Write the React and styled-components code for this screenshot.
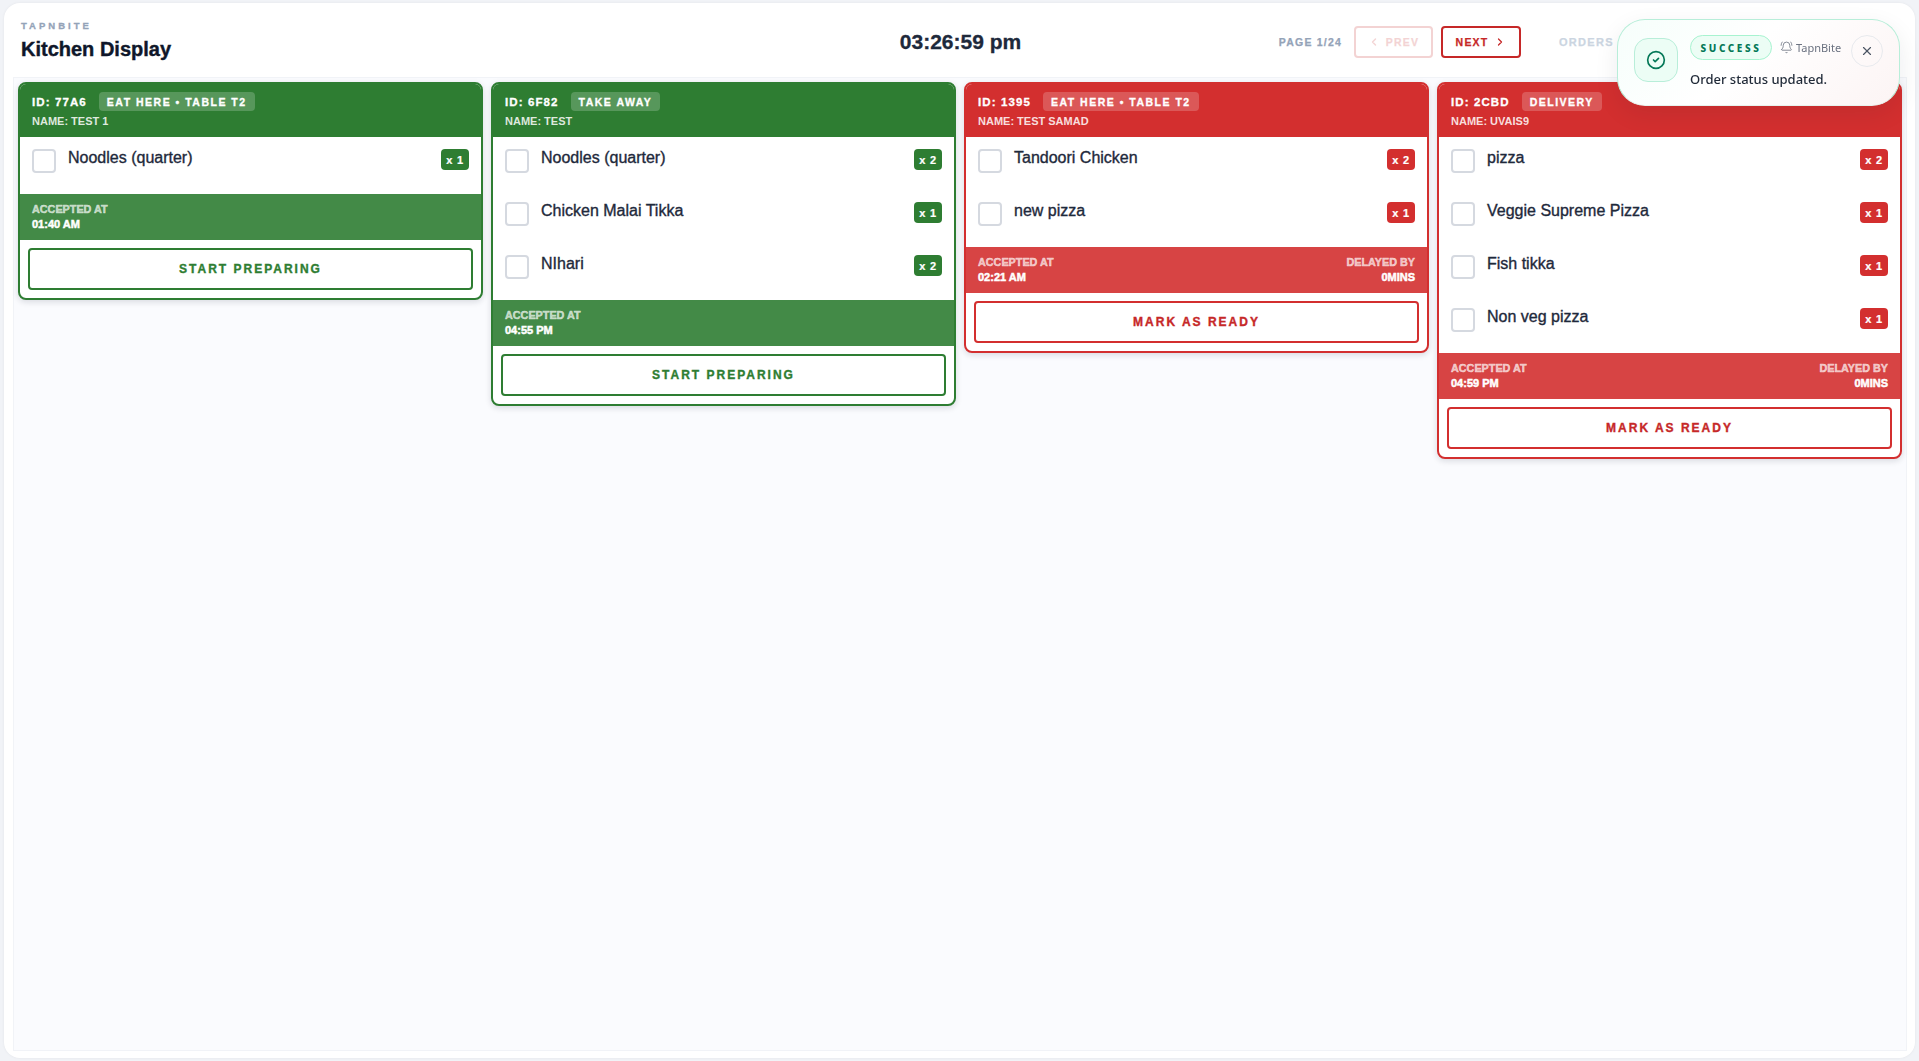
import React from "react";
import styled, { createGlobalStyle } from "styled-components";
import { BellRing, ChevronLeft, ChevronRight, CircleCheck, X } from "lucide-react";

const GlobalStyle = createGlobalStyle`
  html, body {
    margin: 0;
    height: 100%;
    background: #f1f3f7;
  }
  * {
    box-sizing: border-box;
  }
`;

const palette = {
  green: { main: "#2e7d32", soft: "#438a47", ink: "#2e7d32" },
  red: { main: "#d32f2f", soft: "#d74444", ink: "#c62828" },
};

const Page = styled.div`
  height: 1061px;
  padding: 3px 4px 3px 4px;
  font-family: "Liberation Sans", Arial, sans-serif;
  overflow: hidden;
`;

const Panel = styled.div`
  height: 100%;
  display: flex;
  flex-direction: column;
  background: #ffffff;
  border-radius: 16px;
  padding: 0 8px 7px 9px;
  box-shadow: 0 0 3px rgba(15, 23, 42, 0.06);
`;

const TopBar = styled.header`
  height: 74px;
  flex: none;
  display: grid;
  grid-template-columns: 1fr auto 1fr;
  align-items: center;
  padding: 0 0 0 8px;
`;

const Brand = styled.div`
  display: flex;
  flex-direction: column;
  gap: 7px;
`;

const BrandTag = styled.span`
  font-size: 9.5px;
  font-weight: 900;
  letter-spacing: 3px;
  line-height: 11px;
  color: #94a3b8;
  -webkit-text-stroke: 0.3px #94a3b8;
`;

const Title = styled.h1`
  margin: 0;
  font-size: 20px;
  line-height: 22px;
  font-weight: 900;
  color: #0f172a;
  -webkit-text-stroke: 0.4px #0f172a;
`;

const Clock = styled.div`
  font-size: 21px;
  font-weight: 900;
  color: #1e293b;
  margin-right: 7px;
  margin-top: 3px;
  -webkit-text-stroke: 0.3px #1e293b;
`;

const Controls = styled.div`
  display: flex;
  align-items: center;
  justify-content: flex-end;
  margin-top: 4px;
`;

const PageLabel = styled.span`
  font-size: 10.5px;
  font-weight: 900;
  letter-spacing: 1.2px;
  color: #94a3b8;
  margin-right: 12px;
  -webkit-text-stroke: 0.25px #94a3b8;
`;

const PageButton = styled.button`
  display: flex;
  align-items: center;
  justify-content: center;
  gap: 6px;
  width: ${(p) => p.$width}px;
  height: 32px;
  margin-right: 8px;
  padding: 0;
  border: 2px solid #c62828;
  border-radius: 4px;
  background: #ffffff;
  color: #c62828;
  font-family: inherit;
  font-size: 10.5px;
  font-weight: 900;
  letter-spacing: 1.2px;
  -webkit-text-stroke: 0.25px #c62828;
  opacity: ${(p) => (p.disabled ? 0.2 : 1)};
`;

const OrdersLabel = styled.span`
  font-size: 11px;
  font-weight: 900;
  letter-spacing: 1.3px;
  color: #cbd5e1;
  margin-left: 30px;
  width: 348px;
  -webkit-text-stroke: 0.25px #cbd5e1;
`;

const Board = styled.main`
  flex: 1;
  display: grid;
  grid-template-columns: repeat(4, 465px);
  gap: 8px;
  align-content: start;
  align-items: start;
  padding: 4px;
  background: #fafbfe;
  border: 1px solid #f1f3f7;
`;

const Card = styled.article`
  display: flex;
  flex-direction: column;
  background: #ffffff;
  border: 2px solid ${(p) => p.$color};
  border-radius: 8px;
  box-shadow: 0 2px 6px rgba(15, 23, 42, 0.14);
  overflow: hidden;
`;

const CardHead = styled.div`
  height: 53px;
  display: flex;
  flex-direction: column;
  gap: 4px;
  padding: 8px 12px 0;
  background: ${(p) => p.$color};
  color: #ffffff;
`;

const HeadRow = styled.div`
  display: flex;
  align-items: center;
  gap: 12px;
`;

const OrderId = styled.span`
  font-size: 11.5px;
  font-weight: 900;
  letter-spacing: 1.1px;
  -webkit-text-stroke: 0.3px #ffffff;
`;

const TypePill = styled.span`
  height: 19px;
  display: flex;
  align-items: center;
  padding: 0 8px;
  border-radius: 4px;
  background: rgba(255, 255, 255, 0.2);
  font-size: 10.5px;
  font-weight: 900;
  letter-spacing: 1.5px;
  -webkit-text-stroke: 0.3px #ffffff;
`;

const CustomerName = styled.span`
  font-size: 11px;
  line-height: 12px;
  font-weight: 700;
  color: rgba(255, 255, 255, 0.85);
`;

const ItemList = styled.ul`
  list-style: none;
  margin: 0;
  padding: 12px 12px 21px;
  display: flex;
  flex-direction: column;
  gap: 29px;
`;

const ItemRow = styled.li`
  height: 24px;
  display: flex;
  align-items: flex-start;
`;

const Tick = styled.span`
  width: 24px;
  height: 24px;
  flex: none;
  border: 2px solid #d5d9e0;
  border-radius: 4px;
  background: #ffffff;
`;

const ItemName = styled.span`
  flex: 1;
  margin-left: 12px;
  font-size: 16px;
  line-height: 18px;
  font-weight: 400;
  color: #1e293b;
  -webkit-text-stroke: 0.35px #1e293b;
`;

const Qty = styled.span`
  width: 28px;
  height: 21px;
  display: flex;
  align-items: center;
  justify-content: center;
  border-radius: 4px;
  background: ${(p) => p.$color};
  color: #ffffff;
  font-size: 11px;
  font-weight: 900;
  letter-spacing: 0.8px;
  -webkit-text-stroke: 0.2px #ffffff;
`;

const CardFoot = styled.div`
  height: 46px;
  display: flex;
  justify-content: space-between;
  padding: 10px 12px 0;
  background: ${(p) => p.$color};
`;

const FootCell = styled.div`
  display: flex;
  flex-direction: column;
  align-items: ${(p) => (p.$end ? "flex-end" : "flex-start")};
  gap: 4px;
`;

const FootLabel = styled.span`
  font-size: 10.8px;
  line-height: 11px;
  font-weight: 900;
  color: rgba(255, 255, 255, 0.65);
  -webkit-text-stroke: 0.5px rgba(255, 255, 255, 0.65);
`;

const FootValue = styled.span`
  font-size: 11px;
  line-height: 11px;
  font-weight: 900;
  color: #ffffff;
  -webkit-text-stroke: 0.5px #ffffff;
`;

const CardAction = styled.div`
  padding: 8px;
`;

const ActionButton = styled.button`
  width: 100%;
  height: 42px;
  padding: 0 0 1px;
  border: 2px solid ${(p) => p.$color};
  border-radius: 4px;
  background: #ffffff;
  color: ${(p) => p.$ink};
  font-family: inherit;
  font-size: 12px;
  font-weight: 900;
  letter-spacing: 2px;
  -webkit-text-stroke: 0.35px ${(p) => p.$ink};
`;

const Toast = styled.div`
  position: fixed;
  top: 19px;
  left: 1617px;
  width: 283px;
  height: 87px;
  display: flex;
  padding: 15px 16px 0 16px;
  border: 1px solid #b8eed9;
  border-bottom-color: #e6f3ee;
  border-radius: 28px;
  background: linear-gradient(135deg, #f6fefb 0%, #ffffff 45%, #fcf4f4 100%);
  box-shadow: 0 8px 24px rgba(15, 23, 42, 0.08);
  font-family: "Noto Sans", sans-serif;
`;

const ToastIcon = styled.div`
  width: 44px;
  height: 44px;
  flex: none;
  display: flex;
  align-items: center;
  justify-content: center;
  margin-top: 3px;
  border: 1px solid #b8eed9;
  border-radius: 14px;
  background: #ecfdf5;
  color: #047857;
`;

const ToastBody = styled.div`
  flex: 1;
  margin-left: 12px;
`;

const ToastMeta = styled.div`
  display: flex;
  align-items: center;
`;

const ToastBadge = styled.span`
  width: 82px;
  height: 25px;
  display: flex;
  align-items: center;
  justify-content: center;
  border: 1px solid #a7f3d0;
  border-radius: 13px;
  background: #ecfdf5;
  color: #047857;
  font-size: 10px;
  font-weight: 800;
  letter-spacing: 2.6px;
`;

const ToastSource = styled.span`
  display: flex;
  align-items: center;
  gap: 3px;
  margin-left: 8px;
  font-size: 11px;
  color: #6b7280;
`;

const ToastText = styled.p`
  margin: 10px 0 0;
  font-size: 13px;
  line-height: 18px;
  font-weight: 500;
  color: #1f2937;
`;

const ToastClose = styled.button`
  width: 32px;
  height: 32px;
  flex: none;
  display: flex;
  align-items: center;
  justify-content: center;
  padding: 0;
  border: 1px solid #e7e9ed;
  border-radius: 50%;
  background: transparent;
  color: #4b5563;
`;

const orders = [
  {
    id: "77A6",
    type: "EAT HERE • TABLE T2",
    name: "TEST 1",
    accepted: "01:40 AM",
    tone: "green",
    action: "START PREPARING",
    items: [["Noodles (quarter)", 1]],
  },
  {
    id: "6F82",
    type: "TAKE AWAY",
    name: "TEST",
    accepted: "04:55 PM",
    tone: "green",
    action: "START PREPARING",
    items: [
      ["Noodles (quarter)", 2],
      ["Chicken Malai Tikka", 1],
      ["NIhari", 2],
    ],
  },
  {
    id: "1395",
    type: "EAT HERE • TABLE T2",
    name: "TEST SAMAD",
    accepted: "02:21 AM",
    delayed: "0MINS",
    tone: "red",
    action: "MARK AS READY",
    items: [
      ["Tandoori Chicken", 2],
      ["new pizza", 1],
    ],
  },
  {
    id: "2CBD",
    type: "DELIVERY",
    name: "UVAIS9",
    accepted: "04:59 PM",
    delayed: "0MINS",
    tone: "red",
    action: "MARK AS READY",
    items: [
      ["pizza", 2],
      ["Veggie Supreme Pizza", 1],
      ["Fish tikka", 1],
      ["Non veg pizza", 1],
    ],
  },
];

const OrderCard = ({ order }) => {
  const { main, soft, ink } = palette[order.tone];
  return (
    <Card $color={main}>
      <CardHead $color={main}>
        <HeadRow>
          <OrderId>ID: {order.id}</OrderId>
          <TypePill>{order.type}</TypePill>
        </HeadRow>
        <CustomerName>NAME: {order.name}</CustomerName>
      </CardHead>
      <ItemList>
        {order.items.map(([name, qty]) => (
          <ItemRow key={name}>
            <Tick />
            <ItemName>{name}</ItemName>
            <Qty $color={main}>x {qty}</Qty>
          </ItemRow>
        ))}
      </ItemList>
      <CardFoot $color={soft}>
        <FootCell>
          <FootLabel>ACCEPTED AT</FootLabel>
          <FootValue>{order.accepted}</FootValue>
        </FootCell>
        {order.delayed && (
          <FootCell $end>
            <FootLabel>DELAYED BY</FootLabel>
            <FootValue>{order.delayed}</FootValue>
          </FootCell>
        )}
      </CardFoot>
      <CardAction>
        <ActionButton $color={main} $ink={ink}>
          {order.action}
        </ActionButton>
      </CardAction>
    </Card>
  );
};

const App = () => {
  return (
    <Page>
      <GlobalStyle />
      <Panel>
        <TopBar>
          <Brand>
            <BrandTag>TAPNBITE</BrandTag>
            <Title>Kitchen Display</Title>
          </Brand>
          <Clock>03:26:59 pm</Clock>
          <Controls>
            <PageLabel>PAGE 1/24</PageLabel>
            <PageButton $width={79} disabled>
              <ChevronLeft size={12} strokeWidth={2.5} />
              PREV
            </PageButton>
            <PageButton $width={80}>
              NEXT
              <ChevronRight size={12} strokeWidth={2.5} />
            </PageButton>
            <OrdersLabel>ORDERS</OrdersLabel>
          </Controls>
        </TopBar>
        <Board>
          {orders.map((order) => (
            <OrderCard key={order.id} order={order} />
          ))}
        </Board>
      </Panel>
      <Toast>
        <ToastIcon>
          <CircleCheck size={20} strokeWidth={2} />
        </ToastIcon>
        <ToastBody>
          <ToastMeta>
            <ToastBadge>SUCCESS</ToastBadge>
            <ToastSource>
              <BellRing size={13} strokeWidth={1.5} />
              TapnBite
            </ToastSource>
          </ToastMeta>
          <ToastText>Order status updated.</ToastText>
        </ToastBody>
        <ToastClose>
          <X size={14} />
        </ToastClose>
      </Toast>
    </Page>
  );
};

export default App;
